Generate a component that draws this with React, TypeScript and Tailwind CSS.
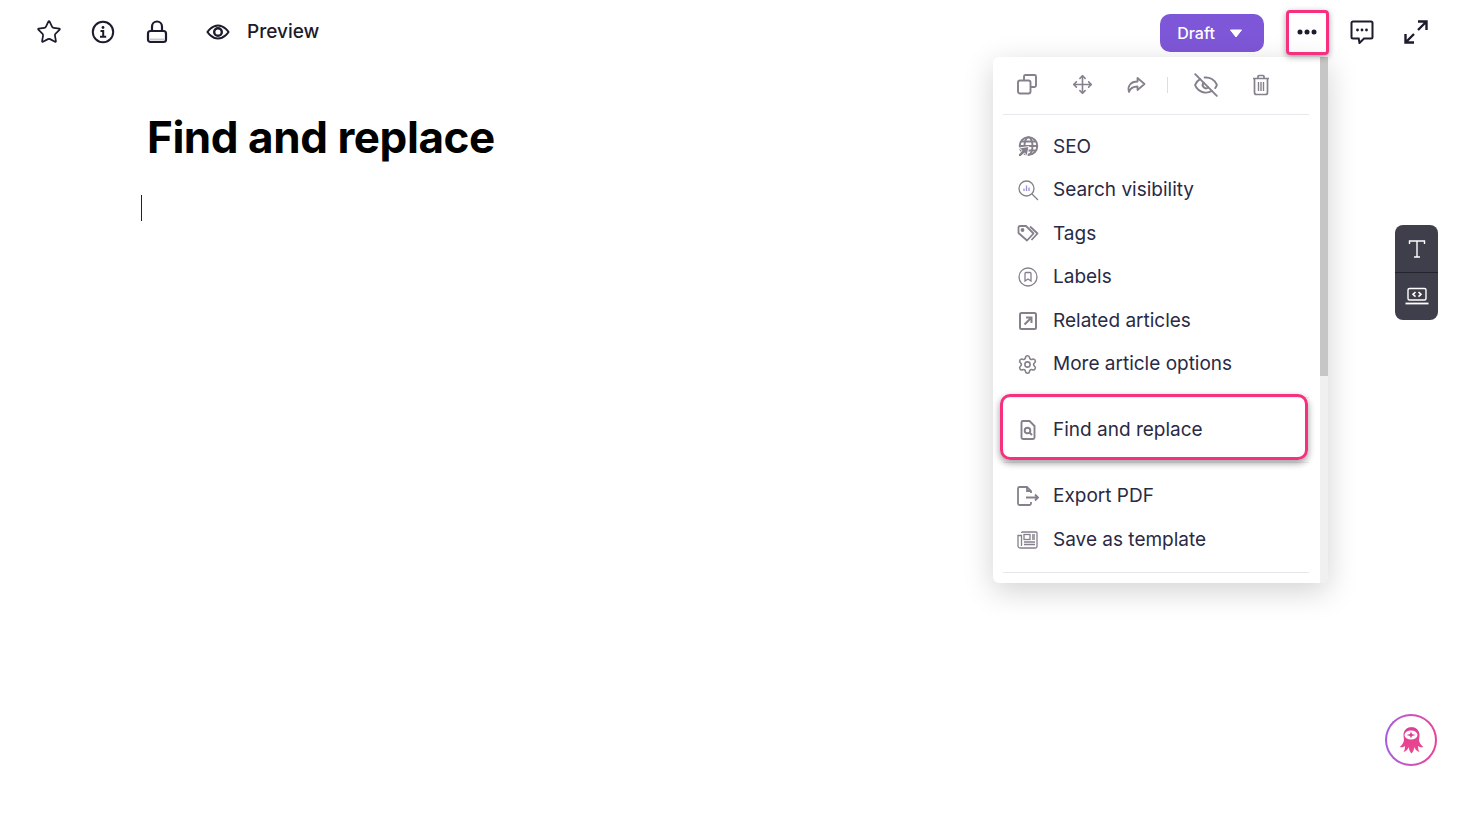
import React from 'react';
import { Star, EyeOff, Move, Settings } from 'lucide-react';

const gray = '#85808c';
const ink = '#1c1c2e';
const menuText = 'text-[19px] leading-[24px] text-[#2a2a45]';

const InfoIcon = () => (
  <svg width="24" height="24" viewBox="0 0 24 24" fill="none" stroke={ink} strokeWidth="2">
    <circle cx="12" cy="12" r="10.200" />
    <circle cx="12" cy="7.500" r="1.400" fill={ink} stroke="none" />
    <path d="M9.500 11h2.700v5.500M9 16.700h6.200" />
  </svg>
);

const LockIcon = () => (
  <svg width="24" height="24" viewBox="0 0 24 24" fill="none" stroke={ink} strokeWidth="2.200">
    <path d="M7 11V6.500a5 5 0 0 1 10 0V11" />
    <rect x="3" y="11" width="18" height="11" rx="2.500" />
    <path d="M4.500 19.500h15" stroke="#c9c9cc" strokeWidth="2" />
  </svg>
);

const EyeIcon = () => (
  <svg width="24" height="24" viewBox="0 0 24 24" fill="none" stroke={ink} strokeWidth="2">
    <path d="M1.500 12S5.500 5.500 12 5.500 22.500 12 22.500 12 18.500 18.500 12 18.500 1.500 12 1.500 12z" />
    <circle cx="12" cy="12" r="3.800" strokeWidth="2.400" />
  </svg>
);

const CommentIcon = () => (
  <svg width="24" height="24" viewBox="0 0 24 24" fill="none" stroke={ink} strokeWidth="2">
    <path d="M3 1.500h18A1.500 1.500 0 0 1 22.500 3v14a1.500 1.500 0 0 1-1.500 1.500h-7L9.500 23l-.8-4.500H3A1.500 1.500 0 0 1 1.500 17V3A1.500 1.500 0 0 1 3 1.500z" />
    <circle cx="7.500" cy="10" r="1.400" fill={ink} stroke="none" />
    <circle cx="12" cy="10" r="1.400" fill={ink} stroke="none" />
    <circle cx="16.500" cy="10" r="1.400" fill={ink} stroke="none" />
  </svg>
);

const ExpandIcon = () => (
  <svg width="24" height="24" viewBox="0 0 24 24" fill="none" stroke={ink} strokeWidth="2.400">
    <path d="M1.500 14v8.500H10M1.500 22.500l8.500-8.500M22.500 10V1.500H14M22.500 1.500L14 10" />
  </svg>
);

const DotsIcon = () => (
  <svg width="20" height="6" viewBox="0 0 20 6" fill={ink}>
    <circle cx="3" cy="3" r="2.500" />
    <circle cx="10" cy="3" r="2.500" />
    <circle cx="17" cy="3" r="2.500" />
  </svg>
);

const CopyIcon = () => (
  <svg width="21" height="21" viewBox="0 0 21 21" fill="none" stroke={gray} strokeWidth="1.900">
    <path d="M7 6.500V2.500A1.500 1.500 0 0 1 8.500 1h9A1.500 1.500 0 0 1 19 2.500v9a1.500 1.500 0 0 1-1.500 1.500h-4" />
    <rect x="1" y="6.500" width="12.500" height="13" rx="2" />
  </svg>
);

const ForwardIcon = () => (
  <svg width="20" height="20" viewBox="0 0 20 20" fill="none" stroke={gray} strokeWidth="1.800" strokeLinejoin="round">
    <path d="M11.500 3l7 6-7 6v-3.500c-4 0-7 1-8.500 5.500-2-6 2-10.500 8.500-10.500z" />
  </svg>
);

const TrashIcon = () => (
  <svg width="20" height="22" viewBox="0 0 20 22" fill="none" stroke={gray} strokeWidth="1.700">
    <path d="M2 4.500h16M7 4.500V2.500A1 1 0 0 1 8 1.500h4a1 1 0 0 1 1 1v2" />
    <path d="M3.500 4.500v14a2 2 0 0 0 2 2h9a2 2 0 0 0 2-2v-14" />
    <path d="M7.500 8v9M10 8v9M12.500 8v9" strokeWidth="1.400" />
  </svg>
);

const SeoIcon = () => (
  <svg width="22" height="22" viewBox="0 0 22 22" fill="none" stroke={gray} strokeWidth="1.900">
    <circle cx="11.500" cy="10" r="8.800" />
    <ellipse cx="11.500" cy="10" rx="4" ry="8.800" />
    <path d="M3 10h17M4.500 5.500h14M4.500 14.500h14" />
    <path d="M12 10.500l-10 1.500 3 2.500-4 4.500 2 2 4.500-4 2.500 3z" fill={gray} stroke="#fff" strokeWidth="0.900" />
  </svg>
);

const VisibilityIcon = () => (
  <svg width="22" height="22" viewBox="0 0 22 22" fill="none" stroke={gray} strokeWidth="1.300">
    <circle cx="9.500" cy="9.500" r="7.500" />
    <path d="M15 15l6 6" />
    <path d="M7 12V9.500M9.500 12V6.500M12 12V8.500" stroke="#9a8fd0" />
  </svg>
);

const TagsIcon = () => (
  <svg width="22" height="18" viewBox="0 0 22 18" fill="none" stroke={gray} strokeWidth="1.800" strokeLinejoin="round">
    <path d="M1.500 2.500A1.500 1.500 0 0 1 3 1h6l7.500 7.500-6.500 7L1.500 8z" />
    <circle cx="5.500" cy="5" r="1" />
    <path d="M13 1.500l7.500 7-6 6.500" />
  </svg>
);

const LabelIcon = () => (
  <svg width="20" height="20" viewBox="0 0 20 20" fill="none" stroke={gray} strokeWidth="1.300">
    <circle cx="10" cy="10" r="9" />
    <path d="M7 6.500a1 1 0 0 1 1-1h4a1 1 0 0 1 1 1V14l-3-2-3 2z" />
  </svg>
);

const RelatedIcon = () => (
  <svg width="18" height="18" viewBox="0 0 18 18" fill="none" stroke={gray} strokeWidth="2">
    <rect x="1" y="1" width="16" height="16" rx="1.500" />
    <path d="M5.500 12.500l7-7M7 5.500h5.500V11" />
  </svg>
);

const FileSearchIcon = () => (
  <svg width="20" height="20" viewBox="0 0 20 20" fill="none" stroke={gray} strokeWidth="1.900">
    <path d="M3.500 2.500A1.500 1.500 0 0 1 5 1h6.500l5 5v11.500A1.500 1.500 0 0 1 15 19H5a1.500 1.500 0 0 1-1.500-1.500z" />
    <circle cx="9.500" cy="10.500" r="2.800" />
    <path d="M11.500 12.500l2.500 2.500" />
  </svg>
);

const ExportIcon = () => (
  <svg width="24" height="22" viewBox="0 0 24 22" fill="none" stroke={gray} strokeWidth="1.800">
    <path d="M15 8V6l-4-4H3.500A1.500 1.500 0 0 0 2 3.500v15A1.500 1.500 0 0 0 3.500 20h10a1.500 1.500 0 0 0 1.500-1.500V17" />
    <path d="M11 2v4h4" />
    <path d="M10 12.500h12M19 9.500l3 3-3 3" />
  </svg>
);

const TemplateIcon = () => (
  <svg width="21" height="18" viewBox="0 0 21 18" fill="none" stroke={gray} strokeWidth="1.300">
    <path d="M4.500 2A1 1 0 0 1 5.500 1H19a1 1 0 0 1 1 1v13.500a1.500 1.500 0 0 1-1.500 1.500H3a2 2 0 0 1-2-2V4.500h3.500V15" />
    <rect x="7" y="3.500" width="6" height="5" />
    <path d="M15 4h3M15 6h3M15 8h3M7 11h11M7 13.500h11" />
  </svg>
);

const TextIcon = () => (
  <svg width="20" height="20" viewBox="0 0 20 20" fill="none" stroke="#fff" strokeWidth="1.400">
    <path d="M2.500 5V2h15v3M10 2v16M7 18h6" />
  </svg>
);

const CodeLaptopIcon = () => (
  <svg width="26" height="20" viewBox="0 0 26 20" fill="none" stroke="#fff" strokeWidth="1.400">
    <rect x="4" y="2.500" width="18" height="11.500" rx="1.500" />
    <path d="M1.500 17.500h23" strokeWidth="1.800" />
    <path d="M11.500 6l-2.500 2.300 2.500 2.300M14.500 6l2.500 2.300-2.500 2.300" strokeWidth="1.600" />
  </svg>
);

const Mascot = () => (
  <svg width="26" height="28" viewBox="0 0 26 28">
    <defs>
      <linearGradient id="mascot" x1="0" y1="0" x2="0" y2="1">
        <stop offset="0" stopColor="#d93f97" />
        <stop offset="1" stopColor="#f0468c" />
      </linearGradient>
    </defs>
    <path
      d="M13 1c5 0 8.500 3.500 8.500 8 0 3-1 5 0 7 1 2.500 2.500 4 4 5-2 .8-4 .2-5.500-1 0 2.500.5 4.500 1.500 6-2.500-.500-4.500-2.500-5-5-.500 2.500-1.500 5-3 6.500-1.500-1.500-2.500-4-3-6.500-.500 2.500-2.500 4.500-5 5 1-1.500 1.500-3.500 1.500-6-1.500 1.200-3.500 1.800-5.500 1 1.500-1 3-2.500 4-5 1-2 0-4 0-7 0-4.500 3.500-8 8.500-8z"
      fill="url(#mascot)"
    />
    <ellipse cx="13" cy="9" rx="6.500" ry="4.500" fill="#fff" />
    <path d="M13 5.500l1 2.500 3.500 1-3.500 1-1 2.500-1-2.500-3.500-1 3.500-1z" fill="#d93f97" />
  </svg>
);

const MenuRow = ({ icon, label, className = '' }: { icon: React.ReactNode; label: string; className?: string }) => (
  <div className={`flex items-center h-[43.5px] ${className}`}>
    <div className="w-[50px] flex justify-center shrink-0 pr-[1px]">{icon}</div>
    <span className={menuText}>{label}</span>
  </div>
);

export default function App() {
  return (
    <div className="relative w-[1461px] h-[814px] overflow-hidden bg-white font-['Inter',sans-serif]">
      {/* top bar */}
      <header className="flex items-center justify-between h-[64px] pl-[36px] pr-[33px]">
        <div className="flex items-center text-[#1b1b2b]">
          <div className="w-[54px] flex"><Star size={26} strokeWidth={1.6} /></div>
          <div className="w-[54px] flex"><div className="ml-[1px] flex"><InfoIcon /></div></div>
          <div className="w-[61px] flex"><div className="ml-[1px] flex"><LockIcon /></div></div>
          <div className="ml-[1px] flex"><EyeIcon /></div>
          <span className="ml-[17px] pt-[1px] text-[19px] font-medium text-[#1b1b2b]">Preview</span>
        </div>
        <div className="flex items-center">
          <div className="flex items-center justify-center gap-[14px] w-[104px] h-[38px] mt-[2px] pr-[4px] rounded-[10px] bg-[#7e57d8] text-white text-[16px] font-medium">
            Draft
            <svg width="14" height="9" viewBox="0 0 14 9" fill="#fff" className="mt-[1px]">
              <path d="M1.500 1h11L7 8z" stroke="#fff" strokeLinejoin="round" />
            </svg>
          </div>
          <div className="w-[86px] flex justify-center"><DotsIcon /></div>
          <div className="w-[24px] flex justify-center"><CommentIcon /></div>
          <div className="w-[54px] flex justify-end"><ExpandIcon /></div>
        </div>
      </header>

      {/* editor body */}
      <main className="pl-[147px] pt-[44px]">
        <h1 className="text-[44px] leading-[60px] -mt-[1px] font-bold text-black tracking-[-0.01em]">Find and replace</h1>
        <div className="-ml-[6px] mt-[28px] w-px h-[26px] bg-[#222]" />
      </main>

      {/* more menu */}
      <div className="absolute left-[993px] top-[57px] w-[335px] h-[526px] flex rounded-[6px] bg-white shadow-[0_8px_30px_rgba(0,0,0,0.18)]">
        <div className="w-[327px] pl-[10px] pr-[11px]">
          <div className="flex items-center h-[58px] pb-[2px] border-b border-[#e8e8ec] pl-[14px]">
            <div className="w-[55px] flex"><CopyIcon /></div>
            <div className="w-[54px] flex"><Move size={21} color={gray} strokeWidth={1.8} /></div>
            <div className="w-[41px] flex"><ForwardIcon /></div>
            <div className="w-px h-[16px] bg-[#dedee2] mr-[25px]" />
            <div className="w-[58px] flex"><EyeOff size={26} color={gray} strokeWidth={1.8} /></div>
            <TrashIcon />
          </div>
          <div className="pt-[10px]">
            <MenuRow icon={<SeoIcon />} label="SEO" />
            <MenuRow icon={<VisibilityIcon />} label="Search visibility" />
            <MenuRow icon={<TagsIcon />} label="Tags" />
            <MenuRow icon={<LabelIcon />} label="Labels" />
            <MenuRow icon={<RelatedIcon />} label="Related articles" />
            <MenuRow icon={<Settings size={21} color={gray} strokeWidth={1.8} />} label="More article options" />
          </div>
          <div className="mt-[11px] pb-[1px] border-y border-[#eeeef0] h-[66px] flex items-center">
            <MenuRow icon={<FileSearchIcon />} label="Find and replace" />
          </div>
          <div className="pt-[11px] pb-[10px] border-b border-[#e8e8ec]">
            <MenuRow icon={<ExportIcon />} label="Export PDF" />
            <MenuRow icon={<TemplateIcon />} label="Save as template" className="mt-[0.5px]" />
          </div>
        </div>
        <div className="w-[8px] bg-[#f0f0f0] rounded-br-[6px]">
          <div className="h-[319px] bg-[#c6c6c6]" />
        </div>
      </div>

      {/* highlight callouts */}
      <div className="absolute left-[1286px] top-[10px] w-[43px] h-[45px] rounded-[4px] border-[3px] border-[#f5317f] shadow-[0_2px_6px_rgba(0,0,0,0.35)]" />
      <div className="absolute left-[1000px] top-[394px] w-[308px] h-[66px] rounded-[10px] border-[3px] border-[#f5317f] shadow-[0_3px_7px_rgba(0,0,0,0.4)]" />

      {/* block type strip */}
      <div className="absolute left-[1395px] top-[225px] w-[43px] h-[95px] rounded-[8px] bg-[#3e3f4b] flex flex-col">
        <div className="h-[48px] flex items-center justify-center border-b border-[#23242c]"><TextIcon /></div>
        <div className="flex-1 flex items-center justify-center pb-[1px]"><CodeLaptopIcon /></div>
      </div>

      {/* help bubble */}
      <div className="absolute left-[1385px] top-[714px] w-[52px] h-[52px] rounded-full p-[2px] bg-gradient-to-r from-[#a45ce0] to-[#ea3f96]">
        <div className="w-full h-full rounded-full bg-white flex items-center justify-center"><Mascot /></div>
      </div>
    </div>
  );
}
